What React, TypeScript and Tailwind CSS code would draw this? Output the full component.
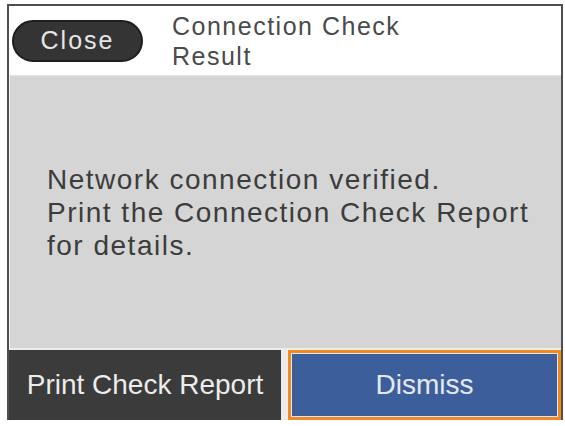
import React from 'react'

const font = { fontFamily: '"Liberation Sans", Arial, sans-serif' }

export default function App() {
  return (
    <div className="w-[565px] h-[426px] bg-white pt-[4px] pl-[7px]" style={font}>
      <div className="w-[556px] h-[416px] border-x-[2px] border-t-[2px] border-[#4f4f4f] flex flex-col bg-[#ececec]">
        {/* en-tête */}
        <div className="h-[70px] bg-white flex items-center border-b border-[#e4e4e4] shrink-0">
          <div className="ml-[3px] w-[131px] h-[42px] rounded-full bg-[#343434] border-[2px] border-[#1e1e1e] flex items-center justify-center text-[#e6e6e6] text-[25px] leading-none tracking-[2px]">
            Close
          </div>
          <div className="ml-[29px] mt-[1px] text-[#4a4a4a] text-[25px] leading-[30px] tracking-[1.5px]">
            Connection Check
            <br />
            Result
          </div>
        </div>

        {/* message */}
        <div className="h-[272px] bg-[#d4d5d4] border-l border-[#f2f2f2] flex items-center shrink-0">
          <p className="ml-[37px] text-[#3c3c3c] text-[28px] leading-[33px] tracking-[1.5px]">
            Network connection verified.
            <br />
            Print the Connection Check Report
            <br />
            for details.
          </p>
        </div>

        {/* boutons */}
        <div className="flex-1 flex items-stretch pt-[2px]">
          <div className="w-[272px] bg-[#3b3b3b] flex items-center justify-center text-[#ececec] text-[28px]">
            Print Check Report
          </div>
          <div className="w-[7px]" />
          <div className="flex-1 border-[3px] border-[#f18a22]">
            <div className="h-full border border-[#dfe6f2] bg-[#3c5f9b] flex items-center justify-center text-[#e4e8f0] text-[28px]">
              Dismiss
            </div>
          </div>
        </div>
      </div>
    </div>
  )
}
